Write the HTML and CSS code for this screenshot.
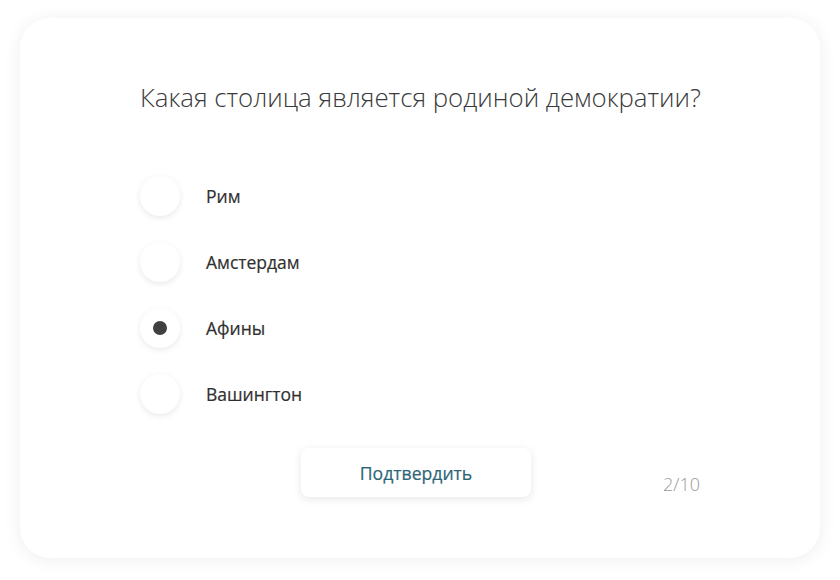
FILE: index.html
```html
<!DOCTYPE html>
<html lang="ru">
<head>
<meta charset="utf-8">
<link rel="stylesheet" href="styles.css">
</head>
<body>
<div class="card">
  <h1 class="question">Какая столица является родиной демократии?</h1>
  <ul class="options">
    <li class="option"><span class="radio"></span><span class="label">Рим</span></li>
    <li class="option"><span class="radio"></span><span class="label">Амстердам</span></li>
    <li class="option"><span class="radio checked"></span><span class="label">Афины</span></li>
    <li class="option"><span class="radio"></span><span class="label">Вашингтон</span></li>
  </ul>
  <div class="footer">
    <button class="submit">Подтвердить</button>
    <span class="counter">2/10</span>
  </div>
</div>
</body>
</html>
```
FILE: styles.css
```css
html, body {
  margin: 0;
  padding: 0;
  background: #ffffff;
}
body {
  padding: 18px 20px;
  font-family: "Open Sans", "Noto Sans", sans-serif;
  color: #333;
}
.card {
  box-sizing: border-box;
  width: 800px;
  height: 540px;
  background: #fff;
  border-radius: 30px;
  box-shadow: 0 2px 18px rgba(0, 0, 0, 0.07);
  padding: 63px 0 0 120px;
}
.question {
  margin: 0;
  font-weight: 300;
  font-size: 25.8px;
  line-height: 32px;
  color: #3a3a3a;
}
.options {
  list-style: none;
  margin: 63px 0 0 0;
  padding: 0;
  display: flex;
  flex-direction: column;
  gap: 26px;
}
.option {
  display: flex;
  align-items: center;
  height: 40px;
}
.radio {
  width: 40px;
  height: 40px;
  border-radius: 50%;
  background: #fff;
  box-shadow: 0 2px 6px rgba(0, 0, 0, 0.09);
  display: flex;
  align-items: center;
  justify-content: center;
  flex: none;
}
.radio.checked::after {
  content: "";
  width: 14px;
  height: 14px;
  border-radius: 50%;
  background: #404040;
}
.label {
  margin-left: 26px;
  font-size: 17.5px;
  font-weight: 500;
  color: #303030;
  -webkit-text-stroke: 0.2px #303030;
}
.footer {
  margin-top: 34px;
  display: flex;
  align-items: flex-start;
  padding-left: 161px;
}
.submit {
  width: 230px;
  height: 49px;
  border: none;
  border-radius: 8px;
  background: #fff;
  box-shadow: 0 2px 8px rgba(0, 0, 0, 0.1);
  font-family: inherit;
  font-size: 17.6px;
  font-weight: 500;
  color: #2c6577;
  -webkit-text-stroke: 0.2px #2c6577;
}
.counter {
  margin-left: 132px;
  margin-top: 24px;
  font-size: 18px;
  font-weight: 300;
  color: #999;
}
```
